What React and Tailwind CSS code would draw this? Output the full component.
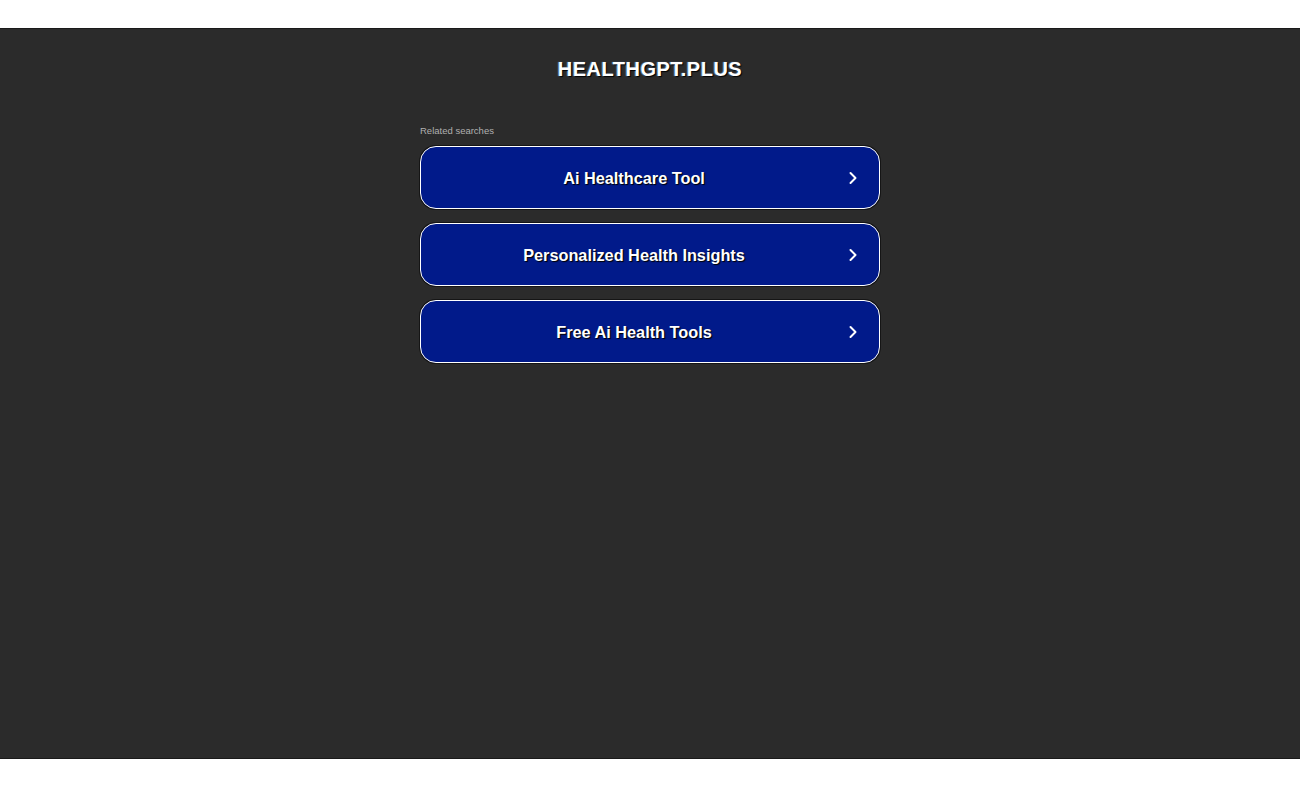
export default function App() {
  const items = ["Ai Healthcare Tool", "Personalized Health Insights", "Free Ai Health Tools"];
  return (
    <div className="w-[1300px] h-[788px] bg-white" style={{ fontFamily: '"Liberation Sans", Arial, sans-serif' }}>
      <div className="h-[28px]" />
      <div className="h-[731px] bg-[#2b2b2b] border-t border-b border-[#1a1a1a] flex flex-col items-center">
        <div className="mt-[29px] text-[20px] leading-[22px] font-bold text-white tracking-[0.5px] [text-shadow:1px_1px_1px_#000,-1px_0_1px_#5b8fd6]">
          HEALTHGPT.PLUS
        </div>
        <div className="mt-[45px] w-[460px]">
          <div className="text-[9.5px] leading-[12px] text-[#b0b0b0] mb-[9px]">Related searches</div>
          <div className="flex flex-col gap-[14px]">
            {items.map((t) => (
              <div key={t} className="relative h-[63px] rounded-[16px] border border-white shadow-[0_0_0_1px_#151515] bg-[#011a8a] flex items-center justify-center pr-[32px] pt-[2px]">
                <span className="text-[16.3px] font-bold text-white [text-shadow:1px_1px_1px_#000]">{t}</span>
                <svg className="absolute right-[19px] top-1/2 -translate-y-1/2" width="14" height="14" viewBox="0 0 14 14">
                  <path d="M4.5 2 L9.5 7 L4.5 12" fill="none" stroke="white" strokeWidth="2" strokeLinecap="round" strokeLinejoin="round" />
                </svg>
              </div>
            ))}
          </div>
        </div>
      </div>
    </div>
  );
}
